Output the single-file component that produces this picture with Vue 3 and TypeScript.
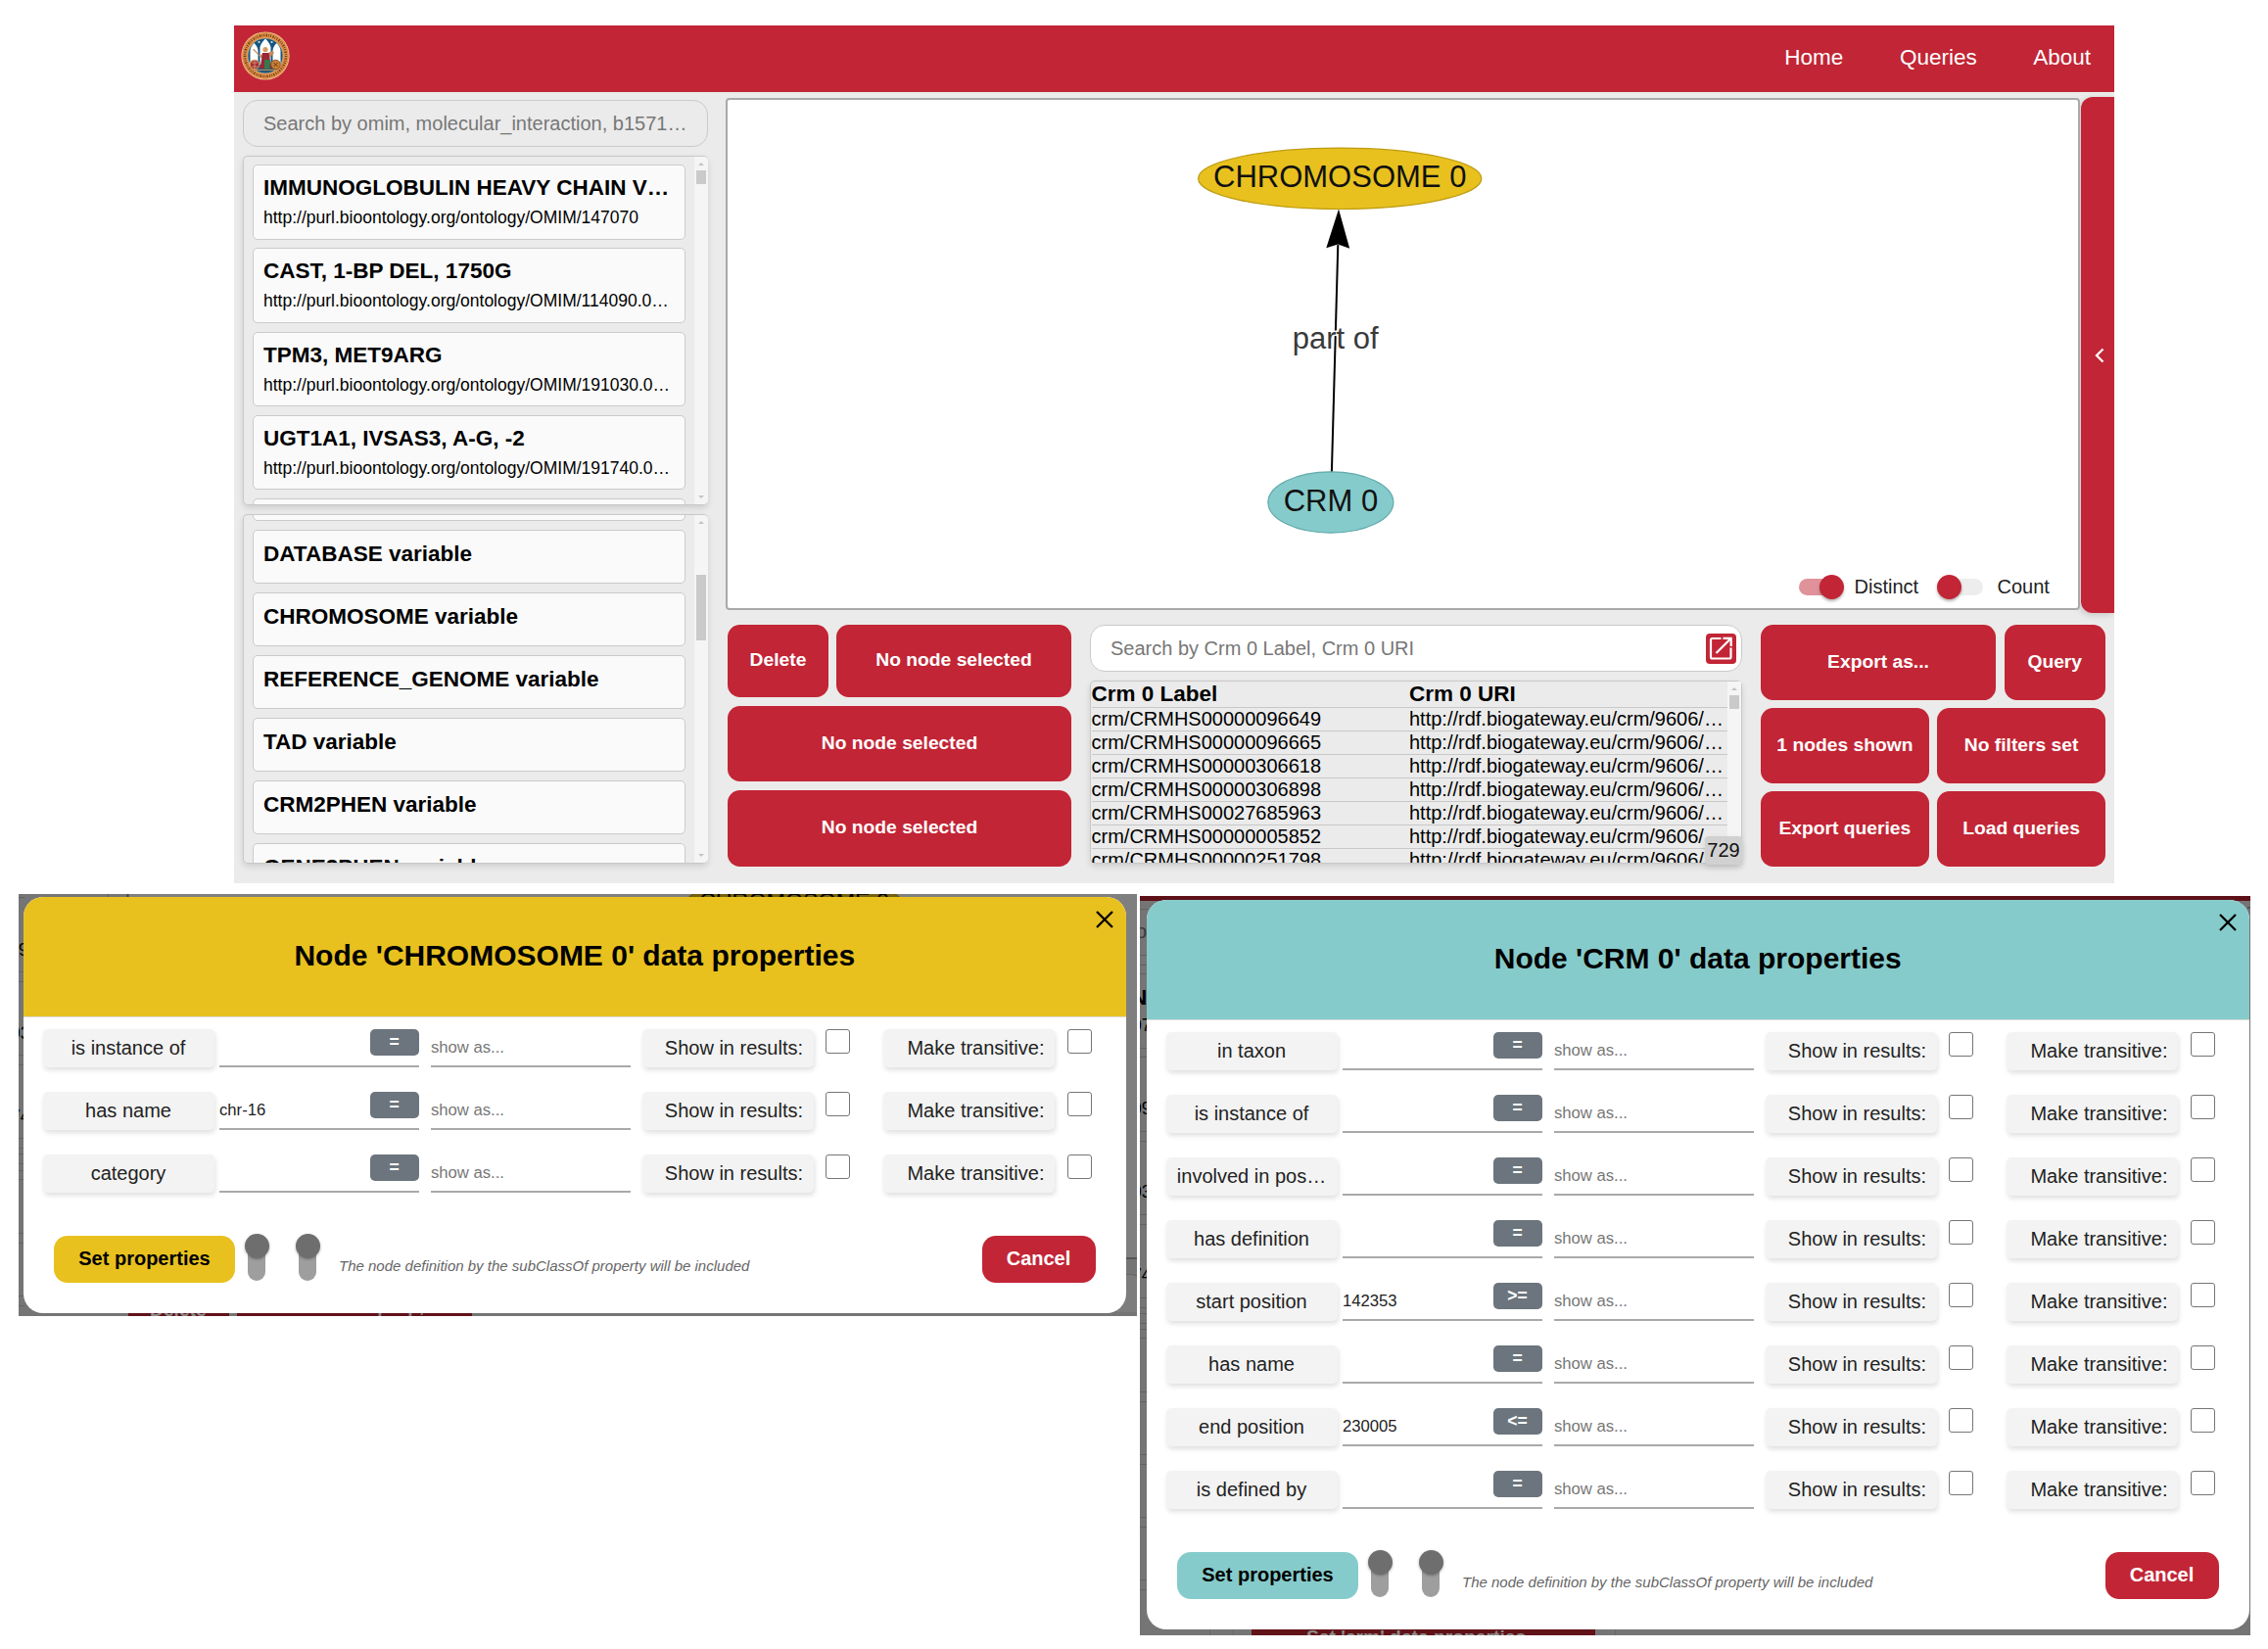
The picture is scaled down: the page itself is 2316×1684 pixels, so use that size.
<script setup lang="ts">
interface Entity { label: string; uri: string }
interface Property { name: string; value: string; op: string }
interface Line { x1: number; y1: number; x2: number; y2: number }
interface Dialog {
  id: string
  title: string
  rows: Property[]
}

const menu: string[] = ['Home', 'Queries', 'About']

const entities: Entity[] = [
  { label: 'IMMUNOGLOBULIN HEAVY CHAIN V…', uri: 'http://purl.bioontology.org/ontology/OMIM/147070' },
  { label: 'CAST, 1-BP DEL, 1750G', uri: 'http://purl.bioontology.org/ontology/OMIM/114090.0…' },
  { label: 'TPM3, MET9ARG', uri: 'http://purl.bioontology.org/ontology/OMIM/191030.0…' },
  { label: 'UGT1A1, IVSAS3, A-G, -2', uri: 'http://purl.bioontology.org/ontology/OMIM/191740.0…' },
  { label: '', uri: '' },
]

const variables: string[] = [
  '',
  'DATABASE variable',
  'CHROMOSOME variable',
  'REFERENCE_GENOME variable',
  'TAD variable',
  'CRM2PHEN variable',
  'GENE2PHEN variable',
]

const results: string[] = [
  'crm/CRMHS00000096649',
  'crm/CRMHS00000096665',
  'crm/CRMHS00000306618',
  'crm/CRMHS00000306898',
  'crm/CRMHS00027685963',
  'crm/CRMHS00000005852',
  'crm/CRMHS00000251798',
]

const prop = (name: string, value = '', op = '='): Property => ({ name, value, op })

const dialogs: Dialog[] = [
  {
    id: 'chromosome',
    title: "Node 'CHROMOSOME 0' data properties",
    rows: [prop('is instance of'), prop('has name', 'chr-16'), prop('category')],
  },
  {
    id: 'crm',
    title: "Node 'CRM 0' data properties",
    rows: [
      prop('in taxon'),
      prop('is instance of'),
      prop('involved in pos…'),
      prop('has definition'),
      prop('start position', '142353', '>='),
      prop('has name'),
      prop('end position', '230005', '<='),
      prop('is defined by'),
    ],
  },
]

const edges = (ys: number[], x2: number): Line[] => ys.map((y) => ({ x1: 0, x2, y1: y + 0.5, y2: y + 0.5 }))
const chromosomeEdges = edges([3, 79, 89, 164, 174, 249, 259, 265, 275, 282, 291, 346, 356, 410, 420], 6)
const crmEdges = edges([13, 60, 70, 79, 155, 164, 240, 250, 325, 335, 410, 420, 426, 436, 442, 451, 506, 516, 570, 580, 634, 644, 698, 708], 8)
</script>

<template>
  <div class="page">
    <div class="app">
      <header class="topbar">
        <svg class="logo" viewBox="0 0 50 50">
          <circle cx="25" cy="25" r="24.6" fill="#e9c9a0" />
          <circle cx="25" cy="25" r="23.9" fill="#e08f45" />
          <circle cx="25" cy="25" r="21" fill="none" stroke="#6b3a1d" stroke-width="2.6" stroke-dasharray=".9 1.5 1.3 1.2 .7 1.3" />
          <circle cx="25" cy="25" r="18" fill="#14567f" stroke="#efc48f" stroke-width=".6" />
          <path d="M9.500 35V20q0-4 4-8q4 4 4 8v15zM19.500 34V16q1-4 5.500-8.500q4.500 4.500 5.500 8.500v18zM32.500 35V20q0-4 4-8q4 4 4 8v15z" fill="#fff" />
          <circle cx="18.500" cy="11" r="1.100" fill="#cfe3ee" />
          <circle cx="31.500" cy="11" r="1.100" fill="#cfe3ee" />
          <path d="M12 18.500l1.500-.5 6 7 3.500-3h4.500l5-2 1.500 2-5 5H20.500z" fill="#c8895a" />
          <circle cx="25" cy="18.500" r="2.600" fill="#d79a5c" />
          <path d="M22 22h6.500l3 16H19.500z" fill="#9b2637" />
          <path d="M24 29h6l-.5 9.500h-5.500z" fill="#357a4a" />
          <circle cx="14" cy="34" r="4.800" fill="#a02c36" stroke="#e0a468" />
          <path d="M11 32h6M11 36h6M14 30v8" stroke="#e9b17c" stroke-width=".7" />
          <circle cx="35.500" cy="34" r="4.800" fill="#c97f35" stroke="#7b4520" stroke-width=".8" />
          <path d="M33.500 32l4 4M37.500 32l-4 4" stroke="#5c3420" stroke-width=".9" />
          <path d="M11.500 39.500h27" stroke="#b98a55" stroke-width="1.200" />
        </svg>
        <nav class="menu">
          <a v-for="m in menu" :key="m">{{ m }}</a>
        </nav>
      </header>

      <div class="body">
        <aside class="side">
          <div class="search">Search by omim, molecular_interaction, b1571…</div>
          <div class="list entities">
            <div class="items">
              <div v-for="(e, i) in entities" :key="i" class="item">
                <div class="label">{{ e.label }}</div>
                <div class="uri">{{ e.uri }}</div>
              </div>
            </div>
            <div class="scroll"><i class="up" /><i class="thumb t1" /><i class="down" /></div>
          </div>
          <div class="list variables">
            <div class="items">
              <div v-for="(v, i) in variables" :key="i" class="item">
                <div class="label">{{ v }}</div>
              </div>
            </div>
            <div class="scroll"><i class="up" /><i class="thumb t2" /><i class="down" /></div>
          </div>
        </aside>

        <main class="work">
          <div class="stage">
            <div class="canvas">
              <svg class="graph" viewBox="743 102 1379 519">
                <path d="M1359.900 482L1366.300 250" stroke="#000" stroke-width="2" />
                <path d="M1367 213.500L1378.200 253.700L1366.300 249.500L1354.300 253.200Z" fill="#000" />
                <ellipse cx="1368.200" cy="182.300" rx="144.600" ry="31.200" fill="#e8c11f" stroke="#bd9b10" stroke-width="1.200" />
                <ellipse cx="1358.900" cy="513" rx="64" ry="31.200" fill="#86cbcb" stroke="#62aaaa" stroke-width="1.200" />
                <text x="1368.200" y="190.700" class="node">CHROMOSOME 0</text>
                <text x="1358.900" y="521.700" class="node">CRM 0</text>
                <text x="1363.700" y="355.700" class="edge">part of</text>
              </svg>
              <div class="options">
                <span class="switch on"><i /></span><span class="opt distinct">Distinct</span>
                <span class="switch"><i /></span><span class="opt">Count</span>
              </div>
            </div>
            <div class="drawer">
              <svg width="12" height="16" viewBox="0 0 12 16"><path d="M9.500 1.500L3 8l6.500 6.500" fill="none" stroke="#fff" stroke-width="2.300" /></svg>
            </div>
          </div>

          <div class="tools">
            <div class="actions">
              <div class="pair">
                <button class="btn del">Delete</button>
                <button class="btn grow">No node selected</button>
              </div>
              <button class="btn second">No node selected</button>
              <button class="btn third">No node selected</button>
            </div>

            <div class="results">
              <div class="search white">
                <span>Search by Crm 0 Label, Crm 0 URI</span>
                <span class="open">
                  <svg width="31" height="31" viewBox="0 0 31 31" fill="none" stroke="#fff" stroke-width="2.200">
                    <path d="M15.500 5H6.500q-1.500 0-1.500 1.500V24q0 1.500 1.500 1.500H24q1.500 0 1.500-1.500V14.500" />
                    <path d="M10.500 20L25 5.500M17.500 4.800H25.700V13" />
                  </svg>
                </span>
              </div>
              <div class="table">
                <div class="rows">
                  <div class="tr th"><span>Crm 0 Label</span><span>Crm 0 URI</span></div>
                  <div v-for="r in results" :key="r" class="tr"><span>{{ r }}</span><span>http://rdf.biogateway.eu/crm/9606/…</span></div>
                </div>
                <div class="scroll"><i class="up" /><i class="thumb t1" /></div>
                <span class="count">729</span>
              </div>
            </div>

            <div class="exports">
              <div class="pair">
                <button class="btn grow">Export as...</button>
                <button class="btn query">Query</button>
              </div>
              <div class="pair">
                <button class="btn half">1 nodes shown</button>
                <button class="btn half">No filters set</button>
              </div>
              <div class="pair">
                <button class="btn half">Export queries</button>
                <button class="btn half">Load queries</button>
              </div>
            </div>
          </div>
        </main>
      </div>
    </div>

    <div class="dialogs">
      <section v-for="d in dialogs" :key="d.id" class="backdrop" :class="d.id">
        <svg v-if="d.id === 'chromosome'" class="behind" width="1142" height="431" viewBox="0 0 1142 431">
          <rect width="1142" height="431" fill="#7f7f7f" />
          <rect width="111" height="431" fill="#757575" />
          <path d="M91.500 0V3M111 420V431M68.500 428V431M1131 372.500H1142" stroke="#5c5c5c" />
          <path d="M111.500 0V3" stroke="#444" stroke-width="2" />
          <rect x="1120" y="373" width="22" height="58" fill="#757575" />
          <path d="M1120 372H1142" stroke="#555" stroke-width="2" />
          <path d="M1120 388.500h17q5 1 8 4V431H1120z" fill="#7d7d7d" stroke="#666" />
          <line v-for="(l, i) in chromosomeEdges" :key="i" v-bind="l" stroke="#646464" />
          <text x="0" y="63" class="ghost small">9</text>
          <text x="-8" y="148" class="ghost small">03</text>
          <text x="-8" y="233" class="ghost small">74</text>
          <ellipse cx="792" cy="8" rx="110" ry="23" fill="#74600f" stroke="#5e4d08" />
          <text x="792" y="16" class="ghost big">CHROMOSOME 0</text>
          <rect y="427" x="0" width="1142" height="4" fill="#757575" />
          <path d="M112 427h103v4H112zM223 427h240v4H223z" fill="#611219" />
          <text x="134" y="430.500" class="ghost red">Delete</text>
          <text x="286" y="427" class="ghost red">Set data prop,</text>
        </svg>
        <svg v-else class="behind" width="1134" height="755" viewBox="0 0 1134 755">
          <rect width="1134" height="755" fill="#757575" />
          <line v-for="(l, i) in crmEdges" :key="i" v-bind="l" stroke="#626262" />
          <text x="-4" y="43" class="ghost hint">o</text>
          <text x="-9" y="111" class="ghost bold">N</text>
          <text x="-8" y="138" class="ghost small">07</text>
          <text x="-8" y="223" class="ghost small">09</text>
          <text x="-8" y="308" class="ghost small">03</text>
          <text x="-8" y="393" class="ghost small">74</text>
          <rect width="1134" height="5" fill="#5e1019" />
          <path d="M71.500 748V755M95.500 748V755M485.500 748V755" stroke="#696969" />
          <rect x="114" y="745" width="351" height="10" fill="#611219" />
          <text x="170" y="763" class="ghost red">Set 'crm' data properties</text>
          <path d="M1131 12h3" stroke="#555" stroke-width="2" />
        </svg>

        <div class="modal">
          <header class="head">
            <h2>{{ d.title }}</h2>
            <svg class="close" width="18" height="18" viewBox="0 0 18 18"><path d="M1 1L17 17M17 1L1 17" stroke="#000" stroke-width="2.300" /></svg>
          </header>
          <div class="props">
            <div v-for="r in d.rows" :key="r.name" class="prop">
              <span class="pill name">{{ r.name }}</span>
              <span class="field value"><span>{{ r.value }}</span><b class="op">{{ r.op }}</b></span>
              <span class="field alias">show as...</span>
              <span class="pill show">Show in results:</span><i class="box" />
              <span class="pill trans">Make transitive:</span><i class="box" />
            </div>
          </div>
          <footer class="foot">
            <button class="set">Set properties</button>
            <span class="vswitch" /><span class="vswitch" />
            <em>The node definition by the subClassOf property will be included</em>
            <button class="cancel">Cancel</button>
          </footer>
        </div>
      </section>
    </div>
  </div>
</template>

<style>
html, body { background: #fff; }
body { overflow: hidden; }
</style>

<style scoped>
.page {
  width: 2316px;
  height: 1684px;
  box-sizing: border-box;
  padding-top: 26px;
  background: #fff;
  color: #000;
  font-family: "Liberation Sans", Arial, sans-serif;
  font-size: 20px;
  overflow: hidden;
}
.page *, .page *::before { box-sizing: border-box; }
i { display: block; }
button { border: 0; margin: 0; padding: 0; font-family: inherit; }
.app { width: 1920px; height: 876px; margin-left: 239px; background: #ebebeb; }
.topbar {
  height: 68px;
  display: flex;
  justify-content: space-between;
  align-items: flex-start;
  padding: 6px 24px 0 6.500px;
  background: #c22535;
}
.logo { width: 50px; height: 50px; }
.menu { display: flex; gap: 57.500px; font-size: 22.500px; line-height: 54px; color: #fff; }

.body { display: flex; height: 808px; }
.side { width: 475px; margin: 8px 18px 0 9px; }
.search {
  height: 48px;
  border: 1px solid #cacaca;
  border-radius: 15px;
  padding-left: 20px;
  line-height: 46px;
  color: #777;
  white-space: nowrap;
}
.list {
  display: flex;
  border: 1px solid #c8c8c8;
  border-right: 0;
  border-radius: 5px;
  overflow: hidden;
  box-shadow: 0 3px 6px rgba(0, 0, 0, .12);
}
.entities { height: 357px; margin-top: 9px; }
.variables { height: 357px; margin-top: 9px; }
.items { flex: 1; padding: 8px 9px 0; }
.variables .items { margin-top: -57px; }
.item {
  width: 442px;
  height: 76.500px;
  margin-bottom: 8.800px;
  padding: 9px 9px 0 10px;
  background: #fafafa;
  border: 1px solid #cacaca;
  border-radius: 5px;
  white-space: nowrap;
}
.variables .item { height: 55px; margin-bottom: 9px; padding-top: 10px; }
.label { font-size: 22.500px; font-weight: bold; line-height: 28px; height: 28px; }
.uri { margin-top: 4px; font-size: 17.500px; line-height: 24px; }
.scroll { width: 14px; display: flex; flex-direction: column; align-items: center; background: #f5f5f5; }
.up, .down { border: 3px solid transparent; height: 0; }
.up { margin-top: 2.500px; border-bottom-color: #c4c4c4; }
.down { margin-top: auto; margin-bottom: 3px; border-top-color: #c4c4c4; }
.thumb { width: 10px; background: #cacaca; }
.t1 { height: 14px; margin-top: 5px; }
.t2 { height: 67px; margin-top: 52px; }

.work { width: 1418px; }
.stage { display: flex; align-items: flex-start; height: 544px; }
.canvas {
  position: relative;
  width: 1383px;
  height: 523px;
  margin-top: 6px;
  background: #fff;
  border: 2px solid #a9a9a9;
  border-radius: 4px;
}
.graph { display: block; width: 1379px; height: 519px; }
.node { font-size: 31px; text-anchor: middle; fill: #111; }
.edge { font-size: 31px; text-anchor: middle; fill: #3a3a3a; stroke: #fff; stroke-width: 2.600px; paint-order: stroke; }
.options { position: absolute; left: 1093.500px; top: 484.500px; display: flex; align-items: center; height: 26px; }
.switch { width: 45px; height: 17.500px; border-radius: 9px; background: #ededed; display: flex; align-items: center; }
.switch i {
  flex: none;
  width: 25px;
  height: 25px;
  margin-left: -2px;
  border-radius: 50%;
  background: #c22535;
  box-shadow: 0 2px 3px rgba(0, 0, 0, .3);
}
.switch.on { background: #e0929a; justify-content: flex-end; }
.switch.on i { margin-right: -1px; }
.opt { margin-left: 12px; line-height: 27px; color: #222; }
.opt.distinct { width: 86px; }
.opt:last-child { margin-left: 15px; }
.drawer {
  width: 34px;
  height: 527px;
  margin: 5px 0 0 1px;
  padding-left: 3px;
  display: flex;
  align-items: center;
  justify-content: center;
  background: #c22535;
  border-radius: 12px 0 0 12px;
  box-shadow: -2px 2px 6px rgba(0, 0, 0, .15);
}

.tools { display: flex; padding-left: 2px; gap: 19px; align-items: flex-start; }
.btn { background: #c22535; color: #fff; font-size: 19.250px; font-weight: bold; border-radius: 12.500px; height: 77px; padding-bottom: 2px; white-space: nowrap; }
.grow { flex: 1; }
.pair { display: flex; gap: 8.500px; }
.actions { width: 351px; display: flex; flex-direction: column; gap: 9px; }
.actions .pair { gap: 8px; }
.actions .pair .btn { height: 74px; }
.del { width: 103px; }
.third { height: 78px; }
.exports { width: 352px; display: flex; flex-direction: column; gap: 8px; }
.query { width: 103.500px; }
.half { flex: 1 1 0; }
.results { width: 666px; }
.search.white { background: #fff; display: flex; justify-content: space-between; align-items: center; padding: 0 5px 0 20px; line-height: 46px; }
.open { display: block; height: 31px; background: #c22535; border-radius: 4px; }
.open svg { display: block; }
.table {
  position: relative;
  height: 187px;
  margin-top: 9px;
  display: flex;
  border: 1px solid #c8c8c8;
  border-radius: 5px;
  box-shadow: 0 3px 6px rgba(0, 0, 0, .12);
}
.rows { flex: 1; overflow: hidden; height: 185px; padding-left: .5px; }
.tr { display: flex; height: 24px; line-height: 22px; border-bottom: 1px solid #c8c8c8; white-space: nowrap; }
.tr span:first-child { width: 324.500px; }
.th { height: 27px; line-height: 25px; font-size: 22.500px; font-weight: bold; }
.count {
  position: absolute;
  right: -1px;
  bottom: -2px;
  width: 38px;
  height: 29px;
  line-height: 28px;
  text-align: center;
  background: #d1d1d1;
  border-radius: 4px;
  color: #111;
  box-shadow: 0 3px 6px rgba(0, 0, 0, .12);
}

.dialogs { display: flex; align-items: flex-start; gap: 3px; margin: 11px 0 0 19px; }
.backdrop { position: relative; overflow: hidden; }
.chromosome { width: 1142px; height: 431px; padding: 3px 0 0 5px; --accent: #e8c11f; }
.crm { width: 1134px; height: 755px; margin-top: 2px; padding: 4px 0 0 7px; --accent: #86cbcb; }
.behind { position: absolute; left: 0; top: 0; }
.ghost { font-size: 20px; fill: #000; }
.ghost.small { font-size: 17.500px; }
.ghost.big { font-size: 23.300px; text-anchor: middle; }
.ghost.hint { fill: #3a3a3a; }
.ghost.bold { font-size: 22.500px; font-weight: bold; }
.ghost.red { font-size: 19.250px; font-weight: bold; fill: #8a8a8a; }
.modal { position: relative; width: 1125.500px; background: #fff; border-radius: 20px; overflow: hidden; }
.chromosome .modal { height: 425px; }
.crm .modal { height: 745px; }
.head {
  position: relative;
  height: 122.500px;
  display: flex;
  align-items: center;
  justify-content: center;
  background: var(--accent);
  border-bottom: 1px solid #dcdcdc;
}
h2 { margin: 0; font-size: 30px; line-height: 36px; padding-bottom: 1px; }
.close { position: absolute; right: 13px; top: 14px; }
.props { padding: 12.500px 0 0 19.500px; }
.prop { display: flex; align-items: flex-start; height: 64px; }
.pill {
  width: 175px;
  height: 39px;
  line-height: 38px;
  background: #f3f3f3;
  border-radius: 5px;
  box-shadow: 1px 3px 5px rgba(0, 0, 0, .12);
  color: #222;
  white-space: nowrap;
}
.name { text-align: center; }
.show, .trans { text-align: right; padding-right: 10.500px; }
.trans { margin-left: 34px; }
.field {
  display: flex;
  justify-content: space-between;
  width: 203.500px;
  height: 39px;
  border-bottom: 2px solid #a9a9a9;
  font-size: 16.670px;
  line-height: 37px;
  color: #222;
}
.value { margin-left: 5.500px; }
.alias { margin: 0 12px 0 12.500px; color: #777; }
.op { width: 50px; height: 27px; line-height: 26px; border-radius: 5px; background: #6c757d; color: #fff; font-size: 17.500px; text-align: center; }
.box { width: 25px; height: 25px; margin-left: 12.500px; border: 1.250px solid #767676; border-radius: 3px; background: #fff; }
.foot { display: flex; align-items: flex-start; margin: 19px 31px 0 31px; height: 48px; }
.set, .cancel { height: 48px; border-radius: 14px; font-size: 20px; font-weight: bold; padding-bottom: 2px; }
.set { width: 185px; background: var(--accent); color: #000; margin-right: 13px; }
.cancel { width: 116px; background: #c22535; color: #fff; margin-left: auto; }
.vswitch { position: relative; width: 18px; height: 45.500px; margin-right: 34px; border-radius: 9px; background: #9e9e9e; }
.vswitch::before {
  content: "";
  position: absolute;
  left: -3.500px;
  top: -2px;
  width: 25px;
  height: 25px;
  border-radius: 50%;
  background: #6e6e6e;
  box-shadow: 0 1px 3px rgba(0, 0, 0, .3);
}
em { font-size: 15px; line-height: 20px; margin: 21px 0 0 -11px; color: #666; }
</style>
